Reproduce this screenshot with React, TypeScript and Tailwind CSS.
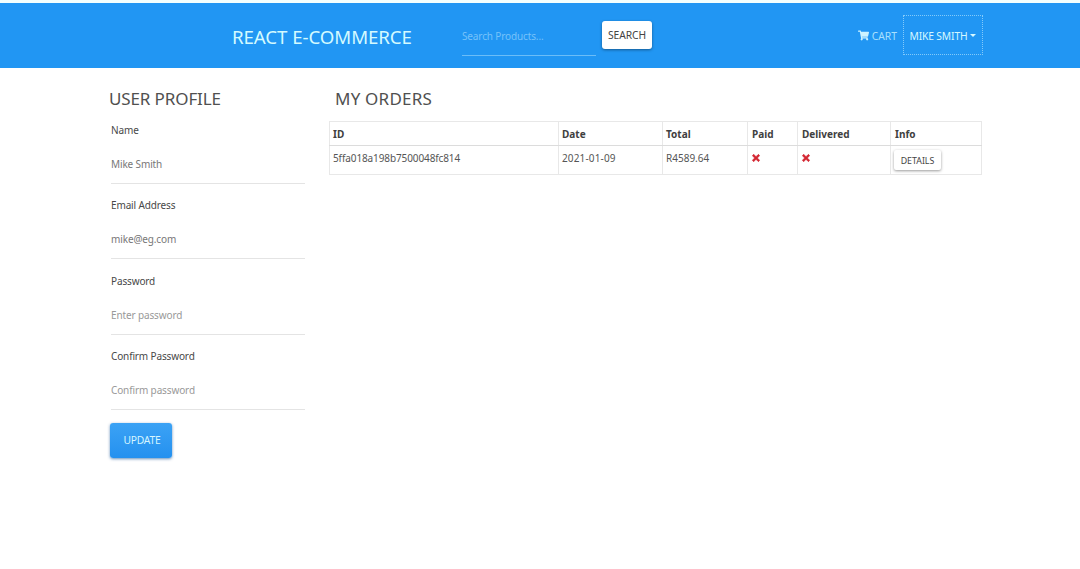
import { FaShoppingCart, FaTimes } from "react-icons/fa";

type Field = { label: string; type: string; value?: string; placeholder?: string };

const fields: Field[] = [
  { label: "Name", type: "text", value: "Mike Smith" },
  { label: "Email Address", type: "email", value: "mike@eg.com" },
  { label: "Password", type: "password", placeholder: "Enter password" },
  { label: "Confirm Password", type: "password", placeholder: "Confirm password" },
];

function Header() {
  return (
    <header className="flex h-[68px] items-center border-t-3 border-[#f3fffe] bg-[#2196f3] pr-[97px] pl-[232px]">
      <a className="w-[230px] pt-[2px] text-[18.7px] leading-[26px] tracking-[-0.08px] text-[#d3faff]">REACT E-COMMERCE</a>
      <form className="flex items-center">
        <input
          className="mt-[2px] h-[39px] w-[134px] border-b border-[#6bbdf8] bg-transparent pb-px text-[10px] tracking-[-0.13px] text-white outline-none placeholder:text-[#76c2fa]"
          placeholder="Search Products..."
        />
        <button type="button" className="mb-px ml-1.5 h-[28px] w-[50px] rounded-[3px] bg-white pt-[2px] text-[10.3px] tracking-[-0.1px] text-[#444] shadow-[0_1px_3px_rgba(0,0,0,0.4)]">
          SEARCH
        </button>
      </form>
      <nav className="mb-px ml-auto flex items-center text-[10.3px]">
        <a className="mr-1.5 flex items-center gap-[3px] pt-[3px] text-[#a9e0fd]">
          <FaShoppingCart className="mb-[2px] size-[11px] text-[#cdf3ff]" />
          CART
        </a>
        <a className="flex h-[40px] w-[80px] items-center justify-center gap-[3px] border border-dotted border-[#83cafa] pt-[3px] tracking-[-0.15px] text-[#d5f8ff]">
          MIKE SMITH
          <span className="mb-[2px] border-x-3 border-t-3 border-x-transparent border-t-[#d5f8ff]" />
        </a>
      </nav>
    </header>
  );
}

function Profile() {
  return (
    <section className="w-[195px]">
      <h2 className="-ml-px h-[35px] text-[17px] leading-[24px] tracking-[-0.12px] text-[#505050]">USER PROFILE</h2>
      <form>
        {fields.map((f) => (
          <div key={f.label} className="mb-[13px] h-[62.4px] pl-px">
            <label className="block h-[18px] text-[10px] leading-[16px] tracking-[-0.14px] text-[#484848]">{f.label}</label>
            <input
              type={f.type}
              defaultValue={f.value}
              placeholder={f.placeholder}
              className="h-[44px] w-full border-b border-[#e4e4e4] bg-transparent pt-[5px] text-[10px] tracking-[-0.13px] text-[#777] outline-none placeholder:text-[#999]"
            />
          </div>
        ))}
        <button
          type="button"
          className="-mt-px block h-[35px] w-[62px] rounded-[3px] bg-linear-to-b from-[#3ba2f5] to-[#2491ef] pt-[2px] pl-[2px] text-[10.3px] tracking-[-0.2px] text-[#d5f5ff] shadow-[0_1px_3px_rgba(0,70,140,0.6)]"
        >
          UPDATE
        </button>
      </form>
    </section>
  );
}

function Cross() {
  return (
    <FaTimes
      className="mt-[7px] -ml-[0.5px] size-[10px] overflow-visible stroke-[#d32530] text-[#d32530]"
      strokeWidth={38}
    />
  );
}

function Orders() {
  return (
    <section className="ml-[24px] w-[653px]">
      <h2 className="h-[34px] pl-1.5 text-[17px] leading-[24px] tracking-[0.22px] text-[#505050]">MY ORDERS</h2>
      <table className="w-full table-fixed border-collapse text-left text-[10px] text-[#555] [&_td]:border [&_td]:border-[#e8e8e8] [&_td]:px-[3px] [&_th]:border [&_th]:border-[#e8e8e8] [&_th]:border-b-[#dcdcdc] [&_th]:px-[3px] [&_th]:pt-[2px]">
        <colgroup>
          <col className="w-[229px]" />
          <col className="w-[104px]" />
          <col className="w-[85px]" />
          <col className="w-[50px]" />
          <col className="w-[93px]" />
          <col />
        </colgroup>
        <thead>
          <tr className="h-[24px] text-[#404040]">
            <th>ID</th>
            <th>Date</th>
            <th>Total</th>
            <th><span className="pl-px">Paid</span></th>
            <th><span className="pl-px">Delivered</span></th>
            <th><span className="pl-px">Info</span></th>
          </tr>
        </thead>
        <tbody>
          <tr className="h-[29px] align-top leading-[24px]">
            <td className="tracking-[-0.11px]">5ffa018a198b7500048fc814</td>
            <td className="tracking-[0.15px]">2021-01-09</td>
            <td>R4589.64</td>
            <td><Cross /></td>
            <td><Cross /></td>
            <td>
              <button type="button" className="mt-[4px] block h-[20px] w-[47px] rounded-[2px] bg-white pt-px text-[8.8px] leading-[20px] text-[#444] shadow-[0_1px_3px_rgba(0,0,0,0.4)]">
                DETAILS
              </button>
            </td>
          </tr>
        </tbody>
      </table>
    </section>
  );
}

export default function App() {
  return (
    <div className="flow-root h-[569px] overflow-hidden bg-white font-['Noto_Sans','Open_Sans',sans-serif]">
      <Header />
      <main className="flex items-start pt-[19px] pl-[110px]">
        <Profile />
        <Orders />
      </main>
    </div>
  );
}
